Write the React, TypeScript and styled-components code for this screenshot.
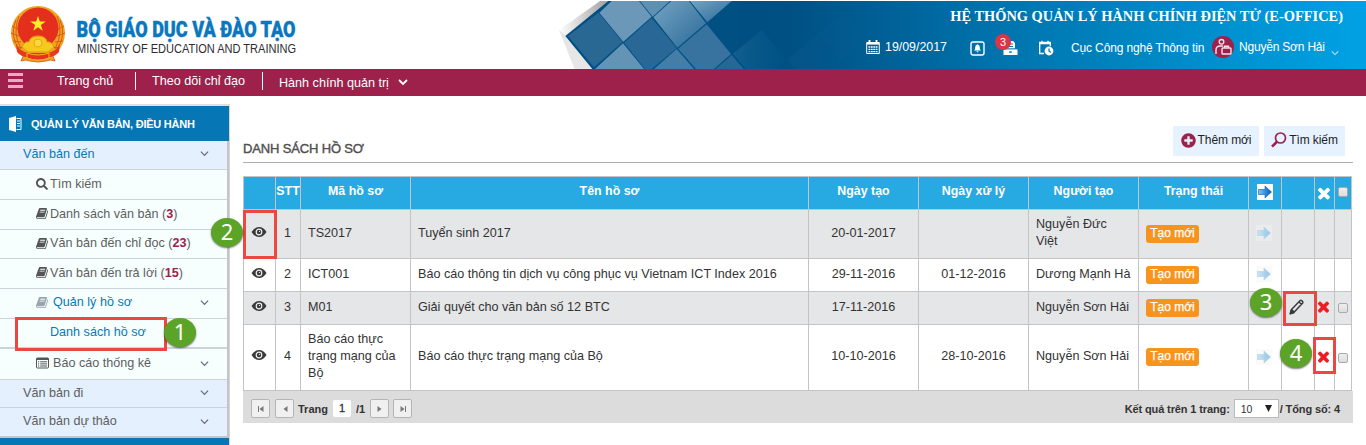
import React from 'react';
import styled, { createGlobalStyle } from 'styled-components';
import { FaSearch, FaPlusCircle } from 'react-icons/fa';

const GlobalStyle = createGlobalStyle`
  * { box-sizing: border-box; }
  body { margin: 0; background: #fff; font-family: "Liberation Sans", Arial, sans-serif; font-size: 12px; color: #333; }
  svg { display: block; flex: none; }
`;

const Page = styled.div`position: relative; width: 1366px; height: 445px; overflow: hidden;`;

/* Header */
const Header = styled.header`display: flex; height: 69px; padding-top: 1px;`;
const Brand = styled.div`width: 559px; padding: 3px 0 0 8px;`;
const LogoSvg = styled.svg`overflow: visible;`;
const Banner = styled.div`
  position: relative; flex: 1; height: 68px;
  background: linear-gradient(90deg, #fff 0, #fff 180px, #004f82 180px, #005083 230px, #0072ab 430px, #0086c2 580px, #00a1e4 800px);
`;
const BannerArt = styled.svg`position: absolute; left: -19px; top: -1px;`;
const BannerBody = styled.div`position: relative; height: 68px; display: flex; flex-direction: column; align-items: flex-end;`;
const SystemTitle = styled.div`
  margin: 6px 23px 0 0; color: #fff; white-space: nowrap;
  font: bold 14.4px/18px "Liberation Serif", "Times New Roman", serif; letter-spacing: 0.01px;
`;
const Tools = styled.div`display: flex; align-items: center; width: 500px; height: 30px; margin-top: 8px; color: #fff; white-space: nowrap;`;
const Tool = styled.div<{ $w: number; $up?: number; $size?: number; $ls?: number }>`
  display: flex; align-items: center; width: ${p => p.$w}px; flex: none; gap: 5px; font-size: ${p => p.$size ?? 12}px;
  letter-spacing: ${p => p.$ls ?? 0}px; padding-bottom: ${p => p.$up ?? 0}px; position: relative;
`;
const MenuMark = styled.div`padding: 10px 0 0 2px;`;
const Count = styled.span`
  position: absolute; left: -8px; top: -7px; width: 16px; height: 16px; border-radius: 50%;
  background: #dc3545; color: #fff; font-size: 11px; line-height: 16px; text-align: center;
`;

/* Navigation */
const Nav = styled.nav`display: flex; height: 27px; background: #9d214b; color: #fff; font-size: 12.6px;`;
const Burger = styled.div`display: flex; flex-direction: column; gap: 3px; width: 40px; padding: 4px 0 0 8px;`;
const Bar = styled.i`width: 15px; height: 3px; background: #e0afc3;`;
const NavItem = styled.a<{ $w: number; $first?: boolean; $drop?: number }>`
  display: flex; gap: 9px; width: ${p => p.$w}px; height: 18px; margin-top: 3px; padding: ${p => p.$drop ?? 0}px 0 0 ${p => (p.$first ? 17 : 16)}px;
  border-left: ${p => (p.$first ? 0 : 1)}px solid #fff; line-height: 18px; white-space: nowrap;
  svg { margin-top: 3px; }
`;

/* Sidebar */
const Body = styled.div`display: flex; padding-top: 8px;`;
const Sidebar = styled.aside`width: 230px; height: 341px; border-top: 2px solid #e0e0e0; border-right: 1px solid #d5d5d8; background: #0676b4;`;
const SideHead = styled.div`
  display: flex; align-items: center; gap: 9px; width: 229px; height: 35px; padding-left: 9px;
  background: #0676b4; color: #fff; font-weight: bold; font-size: 11px; letter-spacing: -0.24px; white-space: nowrap;
`;
const SideList = styled.div`background: #fff; border-right: 2px solid #c5c5c9; border-bottom: 2px solid #c5c5c9;`;
const SideRow = styled.div<{ $h: number; $pad: number; $root?: boolean; $active?: boolean; $gap?: number; $line?: number; $lift?: number }>`
  display: flex; align-items: center; height: ${p => p.$h}px; padding: 0 18px ${p => p.$lift ?? 2}px ${p => p.$pad}px; gap: ${p => p.$gap ?? 1}px;
  background: ${p => (p.$root ? '#e5f0fe' : '#f6fffe')}; color: ${p => (p.$active ? '#0779b5' : '#5e5e5e')};
  border-bottom: ${p => p.$line ?? 1}px solid #cdd3d8; font-size: 12.6px; white-space: nowrap;
`;
const Grow = styled.span`flex: 1;`;
const Num = styled.b`color: #9d214b;`;

/* Main */
const Main = styled.main`width: 1110px; margin-left: 13px;`;
const TitleBar = styled.div`
  display: flex; justify-content: space-between; width: 1110px; height: 59px; border-bottom: 1px solid #b0b0b0; padding: 22px 8px 0 0;
`;
const Title = styled.h1`margin: 15px 0 0; font-size: 13px; letter-spacing: -0.15px; font-weight: normal; line-height: 16px; color: #505050; -webkit-text-stroke: 0.4px #505050;`;
const Actions = styled.div`display: flex; gap: 5px;`;
const Action = styled.button<{ $w: number; $ls?: number }>`
  display: flex; align-items: center; justify-content: center; gap: 2px; width: ${p => p.$w}px; height: 30px; padding: 0 0 2px;
  border: 0; background: #e6f2ff; color: #222; font: 12px "Liberation Sans", Arial, sans-serif; letter-spacing: ${p => p.$ls ?? 0}px; white-space: nowrap;
`;
const Table = styled.div`width: 1109px; margin-top: 13px; border: solid #c4c4c4; border-width: 1px 0 0 1px;`;
const Row = styled.div<{ $h: number; $bg: string }>`
  display: grid; grid-template-columns: 32px 25px 110px 398px 110px 110px 110px 110px 33px 33px 20px 17px;
  height: ${p => p.$h}px; background: ${p => p.$bg};
`;
const Cell = styled.div<{ $center?: boolean; $up?: number; $left?: number }>`
  display: flex; align-items: center; justify-content: ${p => (p.$center ? 'center' : 'flex-start')};
  padding: 0 ${p => (p.$center ? p.$left ?? 0 : 7)}px ${p => p.$up ?? 0}px ${p => (p.$center ? 0 : 7)}px;
  border: solid #c4c4c4; border-width: 0 1px 1px 0; font-size: 12.6px; line-height: 17px;
`;
const Person = styled(Cell)`white-space: pre;`;
const Head = styled(Cell)`color: #fff; font-weight: bold; font-size: 12.4px; padding-bottom: 3px; white-space: nowrap;`;
const Status = styled.span`
  display: block; width: 53px; height: 18px; border-radius: 3px; background: #f7941d; color: #fff;
  font-size: 12px; line-height: 17px; text-align: center; white-space: nowrap; -webkit-text-stroke: 0.25px #fff;
`;
const Check = styled.i`width: 10px; height: 10px; border: 1px solid #aaa; border-radius: 2px; background: linear-gradient(#eee, #ddd);`;
const Pager = styled.div`
  display: flex; align-items: center; width: 1110px; height: 32px; padding: 3px 13px 0 8px; background: #dcdcdc;
  font-weight: bold; font-size: 11px; white-space: nowrap;
`;
const PageBtn = styled.button<{ $ml?: number }>`
  display: flex; align-items: center; justify-content: center; width: 19px; height: 19px; margin-left: ${p => p.$ml ?? 0}px; padding: 0;
  border: 1px solid #b5b5b5; border-radius: 2px; background: #f0f0f0;
`;
const PageLabel = styled.span`margin-left: 4px;`;
const PageNo = styled.span`width: 18px; height: 17px; margin: 0 5px 0 5px; border-radius: 2px; background: #fff; line-height: 17px; text-align: center; font-weight: normal; -webkit-text-stroke: 0.3px #333;`;
const Summary = styled.span`display: flex; align-items: center; letter-spacing: -0.12px;`;
const Select = styled.span`
  display: flex; justify-content: space-between; align-items: center; width: 45px; height: 19px; margin: 0 1px 0 4px; padding: 0 6px;
  border: 1px solid #bbb; background: #fff; font-weight: normal; font-size: 10.5px;
`;

/* Numbered callouts lying over the page */
const Mark = styled.div<{ $x: number; $y: number; $w: number; $h: number }>`
  position: absolute; left: ${p => p.$x}px; top: ${p => p.$y}px; width: ${p => p.$w}px; height: ${p => p.$h}px; border: 3px solid #ec4741;
`;
const Ball = styled.div<{ $x: number; $y: number }>`
  position: absolute; left: ${p => p.$x}px; top: ${p => p.$y}px; width: 32px; height: 29px; border-radius: 50%;
  background: #5ca428; box-shadow: 0 1px 2px rgba(0,0,0,.55); color: #fff; font: 22px/27px "Noto Sans", sans-serif; text-align: center;
`;

const Chevron = ({ size = 9, color = '#667', w = 1.3 }: { size?: number; color?: string; w?: number }) => (
  <svg width={size} height={size} viewBox="0 0 10 10" fill="none" stroke={color} strokeWidth={w}><path d="M1 3l4 4 4-4" /></svg>
);
const Book = ({ light }: { light?: boolean }) => (
  <svg width="13" height="13" viewBox="0 0 1792 1792" fill={light ? '#99a3ad' : '#555'}>
    <path d="M1639 478q40 57 18 129l-275 906q-19 64-76.500 107.500t-122.500 43.500h-923q-77 0-148.500-53.500t-99.500-131.500q-24-67-2-127 0-4 3-27t4-37q1-8-3-21.500t-3-19.500q2-11 8-21t16.500-23.500 16.500-23.500q23-38 45-91.500t30-91.500q3-10 .5-30t-.5-28q3-11 17-28t17-23q21-36 42-92t25-90q1-9-2.500-32t.5-28q4-13 22-30.500t22-22.500q19-26 42.500-84.500t27.500-96.500q1-8-3-25.500t-2-26.500q2-8 9-18t18-23 17-21q8-12 16.500-30.500t15-35 16-36 19.500-32 26.500-23.500 36-11.500 47.500 5.500l-1 3q38-9 51-9h761q74 0 114 56t18 130l-274 906q-36 119-71.500 153.500t-128.500 34.500h-869q-27 0-38 15-11 16-1 43 24 70 144 70h923q29 0 56-15.500t35-41.500l300-987q7-22 5-57 38 15 59 43zm-1064 2q-4 13 2 22.500t20 9.500h608q13 0 25.500-9.500t16.500-22.500l21-64q4-13-2-22.500t-20-9.500h-608q-13 0-25.500 9.500t-16.500 22.500zm-83 256q-4 13 2 22.500t20 9.500h608q13 0 25.500-9.500t16.500-22.500l21-64q4-13-2-22.500t-20-9.500h-608q-13 0-25.500 9.500t-16.500 22.500z" />
  </svg>
);
const ListIcon = () => (
  <svg width="13" height="12" viewBox="0 0 13 12" fill="none" stroke="#555"><rect x=".5" y="1" width="12" height="10" rx="1" /><path d="M.5 2h12" strokeWidth="2" /><path d="M2 4.800h1.200M4.200 4.800H11M2 6.900h1.200M4.200 6.900H11M2 9h1.200M4.200 9H11" /></svg>
);
const Eye = () => (
  <svg width="16" height="12" viewBox="0 0 16 12">
    <path d="M.5 6Q3.500 1 8 1t7.500 5Q12.500 11 8 11T.5 6z" fill="#3a3a3a" /><circle cx="8" cy="6" r="2.800" fill="none" stroke="#eee" strokeWidth="1.200" /><circle cx="8.500" cy="5.400" r=".7" fill="#ddd" />
  </svg>
);
const Times = ({ color, size = 16 }: { color: string; size?: number }) => (
  <svg width={size} height={size} viewBox="0 0 1792 1792" fill={color}>
    <path d="M1490 1322q0 40-28 68l-136 136q-28 28-68 28t-68-28l-294-294-294 294q-28 28-68 28t-68-28l-136-136q-28-28-28-68t28-68l294-294-294-294q-28-28-28-68t28-68l136-136q28-28 68-28t68 28l294 294 294-294q28-28 68-28t68 28l136 136q28 28 28 68t-28 68l-294 294 294 294q28 28 28 68z" />
  </svg>
);
const Arrow = ({ strong }: { strong?: boolean }) => (
  <svg width="16" height="16" viewBox="0 0 16 16">
    <defs>
      <linearGradient id={strong ? 'as' : 'al'} x1="0" x2="1">
        <stop offset="0" stopColor={strong ? '#7cc8f5' : '#c9e5f6'} /><stop offset=".6" stopColor={strong ? '#2a86d6' : '#a9d0ea'} /><stop offset="1" stopColor={strong ? '#14589f' : '#9cc6e2'} />
      </linearGradient>
    </defs>
    <rect width="16" height="16" fill={strong ? '#fff' : '#f4f4f2'} opacity={strong ? 1 : 0.45} />
    <path d="M1.500 5.500H8V2l6.500 6L8 14v-3.500H1.500z" fill={`url(#${strong ? 'as' : 'al'})`} stroke={strong ? '#1f6cb4' : '#b4d5ea'} strokeWidth=".7" />
  </svg>
);
const Pencil = () => (
  <svg width="16" height="16" viewBox="0 0 16 16" fill="none" stroke="#3a3a3a" strokeWidth="1.5" strokeLinejoin="round">
    <path d="M1.500 14.500l1-4L11.200 1.600q.7-.6 1.400 0l1 .9q.7.7.1 1.400L5.300 13z M2.500 10.500l2.800 2.500M10 3l2.500 2.300" />
    <path d="M1.200 14.800l.9-3.300 2.700 2.300z" fill="#3a3a3a" />
  </svg>
);

const Emblem = () => (
  <svg width="60" height="60" viewBox="0 0 60 60">
    <path d="M13 57l4-9h26l4 9q-5-2-9 0-8 2-16 0-4-2-9 0z" fill="#eba51d" stroke="#e0651d" strokeWidth="1" />
    <circle cx="30" cy="29" r="27" fill="#efa51f" />
    <g stroke="#dc5a1a" strokeWidth="1" fill="none">
      <path d="M8 16q-7 15 3 29M11 12q-7 16 2 33M52 16q7 15-3 29M49 12q7 16-2 33" />
      <path d="M4 22l7 4M3 29l8 3M5 37l8 1M9 44l8-1M56 22l-7 4M57 29l-8 3M55 37l-8 1M51 44l-8-1" />
    </g>
    <circle cx="30" cy="24" r="20.500" fill="#e52f1d" />
    <path d="M30 12l1.800 5.600h5.900l-4.800 3.400 1.800 5.700-4.700-3.500-4.700 3.500 1.800-5.700-4.800-3.400h5.900z" fill="#ffed29" />
    <path d="M14 43q3-6 7-5 1-6 9-6t9 6q4-1 7 5l-6 5H20z" fill="#f7c81e" stroke="#e59a1a" strokeWidth="1" />
    <circle cx="30" cy="39" r="4" fill="#fbd938" stroke="#e59a1a" strokeWidth=".8" />
    <path d="M8 40q4 8 13 9h18q9-1 13-9l-1 8q-5 6-12 5H21q-7 1-12-5z" fill="#e53a1c" />
    <path d="M19 49q11 4 22 0v5q-11 4-22 0z" fill="#e7331c" stroke="#efb51f" strokeWidth="1" />
  </svg>
);

const BrandLogo = () => (
  <LogoSvg width="480" height="62" viewBox="0 0 480 62">
    <Emblem />
    <text x="68.500" y="32.500" textLength="219" lengthAdjust="spacingAndGlyphs" fontFamily="Roboto, sans-serif" fontWeight="900" fontSize="21.500" fill="#0b77bf" stroke="#0b77bf" strokeWidth=".4">BỘ GIÁO DỤC VÀ ĐÀO TẠO</text>
    <text x="69" y="49" textLength="219" lengthAdjust="spacingAndGlyphs" fontFamily="Liberation Sans, sans-serif" fontSize="12.300" fill="#2c2c30">MINISTRY OF EDUCATION AND TRAINING</text>
  </LogoSvg>
);

const Pattern = () => (
  <BannerArt width="420" height="69" viewBox="0 0 1260 207">
    <defs>
      <linearGradient id="fold" x1="0" y1="0" x2="1" y2="0"><stop offset="0" stopColor="#fff" /><stop offset="1" stopColor="#999" /></linearGradient>
      <linearGradient id="shine" x1="0" y1="0" x2="1" y2="1"><stop offset="0" stopColor="#75a3c3" /><stop offset="1" stopColor="#2a6a98" /></linearGradient>
      <linearGradient id="fade" x1="0" x2="1"><stop offset="0" stopColor="#135e8f" /><stop offset="1" stopColor="#005689" stopOpacity=".3" /></linearGradient>
    </defs>
    <path d="M57 3H220V207H57z" fill="#fff" />
    <path d="M57 90L180 3H215L80 108z" fill="url(#fold)" />
    <path d="M57 90L80 108 160 207H104z" fill="#e6e6e6" />
    <path d="M76 108L205 3H600V207H157z" fill="#005083" />
    <path d="M84 108L175 38 248 126 162 202z" fill="#2a6894" />
    <path d="M178 38L215 3H297L335 50 250 125z" fill="#6b98b8" />
    <path d="M335 54L410 145 335 207H315L252 128z" fill="#296896" />
    <path d="M249 130L312 207H165z" fill="#6394b5" />
    <path d="M300 3H390L338 50z" fill="#5e90b1" />
    <path d="M340 52L394 3H447L498 70 412 143z" fill="url(#shine)" />
    <path d="M450 3H575L502 67z" fill="url(#shine)" />
    <path d="M500 73L573 162 522 207H468L414 146z" fill="#37739e" />
    <path d="M410 147L462 207H342z" fill="#447ea6" />
    <path d="M575 165L611 207H527z" fill="#286795" />
    <path d="M579 161L665 90 740 180 710 207H617z" fill="url(#fade)" />
    <path d="M742 180L830 105 915 207H765z" fill="url(#fade)" opacity=".35" />
    <path d="M832 103L912 35 970 105 905 185z" fill="#0b6095" opacity=".2" />
  </BannerArt>
);

const CalendarIcon = () => (
  <svg width="14" height="14" viewBox="0 0 14 14" fill="none" stroke="#fff">
    <path d="M.7 2.500h12.600v11H.7z" /><path d="M1 3.500h12" strokeWidth="2.200" /><path d="M3.500 0v4M10.500 0v4" strokeWidth="1.800" />
    <path d="M2.500 7h9M2.500 9.300h9M2.500 11.600h9" strokeWidth="1.300" strokeDasharray="1.800 .6" />
  </svg>
);
const BellIcon = () => (
  <svg width="15" height="15" viewBox="0 0 15 15">
    <rect x="1" y="1" width="13" height="13" rx="2" fill="none" stroke="#fff" strokeWidth="1.400" />
    <path d="M7.500 3.300q2.400.6 2.400 3.400v1.500l1.100 1.300H4l1.100-1.300V6.700q0-2.800 2.400-3.400zM6.200 10.300h2.600L7.500 11.600z" fill="#fff" />
  </svg>
);
const InboxIcon = () => (
  <svg width="15" height="15" viewBox="0 0 15 15" fill="#fff">
    <path d="M4 0h6l2 2v6H4z" /><path d="M5 3h5M5 5.500h5M0 7.800h15" stroke="#0679b3" /><path d="M.5 8.400h14V14H.5z" />
    <path d="M6.200 10.300h2.600v1.500H6.200z" fill="#0679b3" />
  </svg>
);
const ScheduleIcon = () => (
  <svg width="16" height="16" viewBox="0 0 16 16" fill="none" stroke="#fff" strokeWidth="1.300">
    <path d="M6 13.500H1.700v-11h10.600V6M1 3.500h12M4 .8v3M10 .8v3" /><circle cx="11" cy="11" r="4.400" fill="#fff" stroke="none" />
    <path d="M11 8.500V11l1.800 1.400" stroke="#0c7db9" />
  </svg>
);
const UserIcon = () => (
  <svg width="22" height="22" viewBox="0 0 22 22">
    <circle cx="11" cy="11" r="11" fill="#9d214b" />
    <g fill="none" stroke="#f5e0e8" strokeWidth="1.400"><circle cx="9.500" cy="5.800" r="2.300" /><path d="M4 18v-4q0-4 4.500-4H11" /><rect x="10" y="12" width="9" height="6" rx=".8" /><path d="M12.500 12v-1.700h4V12" /></g>
  </svg>
);
const DocumentIcon = () => (
  <svg width="13" height="16" viewBox="0 0 13 16">
    <path d="M0 2l7-2v16l-7-2z" fill="#fff" /><path d="M7.500 2.500H12v11H7.500M8 5h3M8 7.500h3M8 10h3" fill="none" stroke="#fff" />
  </svg>
);
const FindIcon = () => (
  <svg width="16" height="16" viewBox="0 0 16 16" fill="none" stroke="#9d214b"><circle cx="9.500" cy="6" r="5" strokeWidth="1.700" /><path d="M6 9.700L1 14.600" strokeWidth="2.600" /></svg>
);
const StepIcon = ({ back, end }: { back?: boolean; end?: boolean }) => (
  <svg width="8" height="8" viewBox="0 0 8 8" fill="#777"><g transform={back ? 'matrix(-1 0 0 1 8 0)' : undefined}><path d="M1.500 1l4 3-4 3z" />{end && <path d="M6 1h1v6H6z" />}</g></svg>
);

type Rec = { h: number; code: string; name: string; made: string; due: string; by: string; own?: boolean };
const records: Rec[] = [
  { h: 49, code: 'TS2017', name: 'Tuyển sinh 2017', made: '20-01-2017', due: '', by: 'Nguyễn Đức\nViệt' },
  { h: 33, code: 'ICT001', name: 'Báo cáo thông tin dịch vụ công phục vụ Vietnam ICT Index 2016', made: '29-11-2016', due: '01-12-2016', by: 'Dương Mạnh Hà' },
  { h: 33, code: 'M01', name: 'Giải quyết cho văn bản số 12 BTC', made: '17-11-2016', due: '', by: 'Nguyễn Sơn Hải', own: true },
  { h: 66, code: 'Báo cáo thực trạng mạng của Bộ', name: 'Báo cáo thực trạng mạng của Bộ', made: '10-10-2016', due: '28-10-2016', by: 'Nguyễn Sơn Hải', own: true },
];
const headings = ['', 'STT', 'Mã hồ sơ', 'Tên hồ sơ', 'Ngày tạo', 'Ngày xử lý', 'Người tạo', 'Trạng thái'];

export default function App() {
  return (
    <Page>
      <GlobalStyle />
      <Header>
        <Brand><BrandLogo /></Brand>
        <Banner>
          <Pattern />
          <BannerBody>
            <SystemTitle>HỆ THỐNG QUẢN LÝ HÀNH CHÍNH ĐIỆN TỬ (E-OFFICE)</SystemTitle>
            <Tools>
              <Tool $w={104} $up={3} $size={12.4}><CalendarIcon />19/09/2017</Tool>
              <Tool $w={33}><BellIcon /></Tool>
              <Tool $w={35}><InboxIcon /><Count>3</Count></Tool>
              <Tool $w={33}><ScheduleIcon /></Tool>
              <Tool $w={141} $ls={-0.14}>Cục Công nghệ Thông tin</Tool>
              <Tool $w={117} $ls={-0.2} $up={2}><UserIcon />Nguyễn Sơn Hải</Tool>
              <MenuMark><Chevron size={8} color="#bfe3f5" /></MenuMark>
            </Tools>
          </BannerBody>
        </Banner>
      </Header>
      <Nav>
        <Burger><Bar /><Bar /><Bar /></Burger>
        <NavItem $w={95} $first>Trang chủ</NavItem>
        <NavItem $w={127}>Theo dõi chỉ đạo</NavItem>
        <NavItem $w={160} $drop={2}>Hành chính quản trị<Chevron size={10} color="#fff" w={1.800} /></NavItem>
      </Nav>
      <Body>
        <Sidebar>
          <SideHead><DocumentIcon />QUẢN LÝ VĂN BẢN, ĐIỀU HÀNH</SideHead>
          <SideList>
            <SideRow $h={29} $pad={23} $root $active $lift={3}>Văn bản đến<Grow /><Chevron /></SideRow>
            <SideRow $h={30} $pad={36} $gap={2} $lift={1}><FaSearch size={12} color="#555" />Tìm kiếm</SideRow>
            <SideRow $h={30} $pad={36}><Book /><span>Danh sách văn bản (<Num>3</Num>)</span></SideRow>
            <SideRow $h={29} $pad={36}><Book /><span>Văn bản đến chỉ đọc (<Num>23</Num>)</span></SideRow>
            <SideRow $h={30} $pad={36}><Book /><span>Văn bản đến trả lời (<Num>15</Num>)</span></SideRow>
            <SideRow $h={30} $pad={36} $active $gap={4} $lift={3}><Book light />Quản lý hồ sơ<Grow /><Chevron /></SideRow>
            <SideRow $h={30} $pad={50} $active $line={2} $lift={3}>Danh sách hồ sơ</SideRow>
            <SideRow $h={31} $pad={36} $gap={4}><ListIcon />Báo cáo thống kê<Grow /><Chevron /></SideRow>
            <SideRow $h={28} $pad={23} $root>Văn bản đi<Grow /><Chevron /></SideRow>
            <SideRow $h={28} $pad={23} $root $line={0}>Văn bản dự thảo<Grow /><Chevron /></SideRow>
          </SideList>
        </Sidebar>
        <Main>
          <TitleBar>
            <Title>DANH SÁCH HỒ SƠ</Title>
            <Actions>
              <Action $w={86} $ls={-0.08}><FaPlusCircle size={15} color="#9d214b" />Thêm mới</Action>
              <Action $w={81} $ls={-0.08}><FindIcon />Tìm kiếm</Action>
            </Actions>
          </TitleBar>
          <Table>
            <Row $h={33} $bg="#27a9e1">
              {headings.map((h, i) => <Head key={i} $center>{h}</Head>)}
              <Head $center $left={1}><Arrow strong /></Head>
              <Head $center />
              <Cell $center $left={1}><Times color="#fff" size={18} /></Cell>
              <Head $center><Check /></Head>
            </Row>
            {records.map((r, i) => (
              <Row key={i} $h={r.h} $bg={i % 2 ? '#fff' : '#e5e6e8'}>
                <Cell $center $up={5} $left={1}><Eye /></Cell>
                <Cell $center $up={2} $left={1}>{i + 1}</Cell>
                <Cell $up={2}>{r.code}</Cell>
                <Cell $up={2}>{r.name}</Cell>
                <Cell $center $up={2}>{r.made}</Cell>
                <Cell $center $up={2}>{r.due}</Cell>
                <Person $up={2}>{r.by}</Person>
                <Cell $up={1}><Status>Tạo mới</Status></Cell>
                <Cell $center $up={2} $left={2}><Arrow /></Cell>
                <Cell $center $up={3} $left={2}>{r.own && <Pencil />}</Cell>
                <Cell $center $up={3} $left={2}>{r.own && <Times color="#ee1c25" size={17} />}</Cell>
                <Cell $center>{r.own && <Check />}</Cell>
              </Row>
            ))}
          </Table>
          <Pager>
            <PageBtn><StepIcon back end /></PageBtn><PageBtn $ml={5}><StepIcon back /></PageBtn>
            <PageLabel>Trang</PageLabel><PageNo>1</PageNo>/1
            <PageBtn $ml={5}><StepIcon /></PageBtn><PageBtn $ml={4}><StepIcon end /></PageBtn>
            <Grow />
            <Summary>Kết quả trên 1 trang:<Select>10<svg width="7" height="7" viewBox="0 0 7 7"><path d="M0 0h7L3.500 7z" fill="#222" /></svg></Select>/ Tổng số: 4</Summary>
          </Pager>
        </Main>
      </Body>
      <Mark $x={15} $y={317} $w={152} $h={34} />
      <Mark $x={243} $y={210} $w={34} $h={49} />
      <Mark $x={1283} $y={291} $w={34} $h={35} />
      <Mark $x={1313} $y={337} $w={23} $h={37} />
      <Ball $x={164} $y={318}>1</Ball>
      <Ball $x={211} $y={218}>2</Ball>
      <Ball $x={1250} $y={288}>3</Ball>
      <Ball $x={1280} $y={339}>4</Ball>
    </Page>
  );
}
